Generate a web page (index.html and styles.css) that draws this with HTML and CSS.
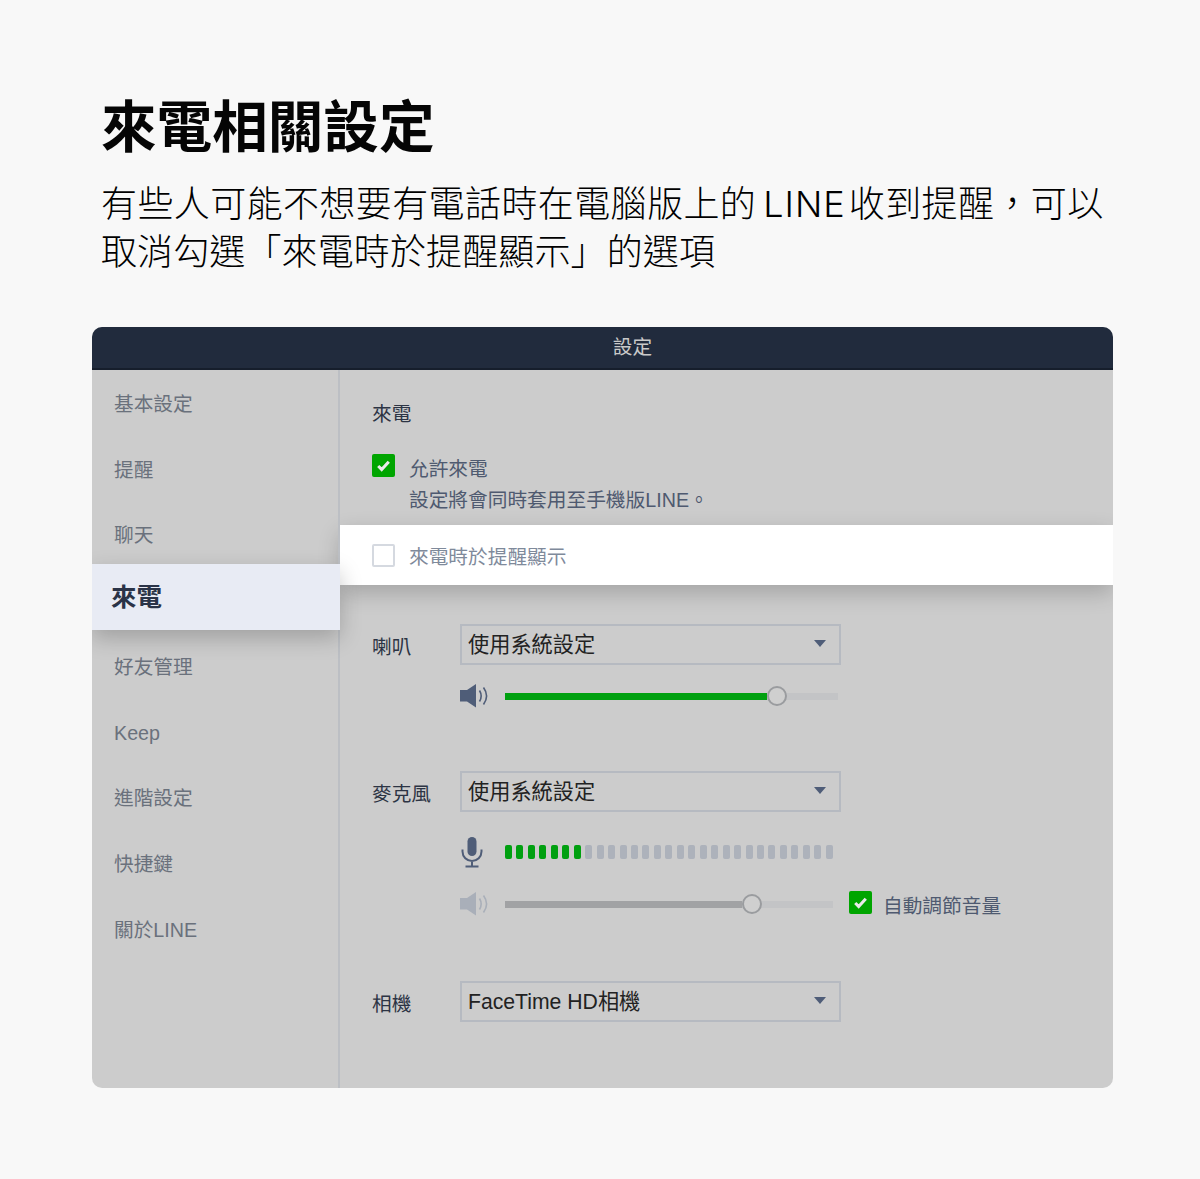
FILE: index.html
```html
<!DOCTYPE html>
<html lang="zh-Hant">
<head>
<meta charset="utf-8">
<title>來電相關設定</title>
<link rel="stylesheet" href="styles.css">
</head>
<body>
<header class="intro">
  <h1 class="title">來電相關設定</h1>
  <p class="lead"><span class="line-a">有些人可能不想要有電話時在電腦版上的<span class="latin">LINE</span>收到提醒，可以</span><span class="line-b">取消勾選「來電時於提醒顯示」的選項</span></p>
</header>
<section class="window">
  <div class="titlebar">設定</div>
  <div class="content">
    <nav class="side">
      <div class="nav-item">基本設定</div>
      <div class="nav-item">提醒</div>
      <div class="nav-item">聊天</div>
      <div class="nav-item active">來電</div>
      <div class="nav-item">好友管理</div>
      <div class="nav-item">Keep</div>
      <div class="nav-item">進階設定</div>
      <div class="nav-item">快捷鍵</div>
      <div class="nav-item">關於LINE</div>
    </nav>
    <main class="main">
      <div class="heading">來電</div>
      <div class="check-row allow">
        <span class="box on"><svg viewBox="0 0 24 24" width="24" height="24"><path d="M6.500 12.500l3.600 3.600 7.400-8" fill="none" stroke="#e9e9e9" stroke-width="3.200"/></svg></span>
        <div class="check-text">允許來電<br>設定將會同時套用至手機版LINE。</div>
      </div>
      <div class="highlight">
        <span class="box off"></span>
        <span class="highlight-text">來電時於提醒顯示</span>
      </div>
      <div class="device speaker">
        <div class="label">喇叭</div>
        <div class="controls">
          <div class="select">使用系統設定<span class="caret"></span></div>
          <div class="slider-row first">
            <svg class="spk" viewBox="0 0 28 24" width="28" height="24"><path d="M0 6h7l9-6v23.500l-9-6H0z" fill="#4f5d78"/><path d="M19.500 6.500c2 3.300 2 7.700 0 11M23.500 3.500c4 5.500 4 11.500 0 17" fill="none" stroke="#4f5d78" stroke-width="1.600"/></svg>
            <div class="track w333"><div class="fill green w262"></div><span class="thumb"></span></div>
          </div>
        </div>
      </div>
      <div class="device mic">
        <div class="label">麥克風</div>
        <div class="controls">
          <div class="select">使用系統設定<span class="caret"></span></div>
          <div class="meter-row">
            <svg class="micicon" viewBox="0 0 24 32" width="24" height="32"><rect x="7.500" y="1" width="9" height="19" rx="4.500" fill="#4f5d78"/><path d="M2.500 13.500v2a9.500 9.500 0 0 0 19 0v-2M12 25v5M5.500 30.500h13" fill="none" stroke="#4f5d78" stroke-width="2"/></svg>
            <div class="meter">
              <i class="g"></i><i class="g"></i><i class="g"></i><i class="g"></i><i class="g"></i><i class="g"></i><i class="g"></i><i></i><i></i><i></i><i></i><i></i><i></i><i></i><i></i><i></i><i></i><i></i><i></i><i></i><i></i><i></i><i></i><i></i><i></i><i></i><i></i><i></i><i></i>
            </div>
          </div>
          <div class="slider-row second">
            <svg class="spk" viewBox="0 0 28 24" width="28" height="24"><path d="M0 6h7l9-6v23.500l-9-6H0z" fill="#a9afb9"/><path d="M19.500 6.500c2 3.300 2 7.700 0 11M23.500 3.500c4 5.500 4 11.500 0 17" fill="none" stroke="#a9afb9" stroke-width="1.600"/></svg>
            <div class="track w329"><div class="fill grey w237"></div><span class="thumb"></span></div>
            <span class="box on auto"><svg viewBox="0 0 24 24" width="24" height="24"><path d="M6.500 12.500l3.600 3.600 7.400-8" fill="none" stroke="#e9e9e9" stroke-width="3.200"/></svg></span>
            <span class="auto-text">自動調節音量</span>
          </div>
        </div>
      </div>
      <div class="device cam">
        <div class="label">相機</div>
        <div class="controls">
          <div class="select">FaceTime HD相機<span class="caret"></span></div>
        </div>
      </div>
    </main>
  </div>
</section>
</body>
</html>
```
FILE: styles.css
```css
* { box-sizing: border-box; }
html, body { margin: 0; padding: 0; }
body {
  width: 1200px;
  height: 1179px;
  background: #f8f8f8;
  font-family: "Liberation Sans", "Noto Sans CJK TC", sans-serif;
  overflow: hidden;
  padding-top: 87px;
}
.intro { padding-left: 101px; height: 240px; }
.title {
  margin: 0;
  font-family: "Noto Sans CJK TC", sans-serif;
  font-size: 55.600px;
  line-height: 72px;
  font-weight: 700;
  color: #050505;
}
.lead {
  margin: 18px 0 0;
  font-family: "Noto Sans CJK TC", sans-serif;
  font-size: 36px;
  font-weight: 300;
  line-height: 48px;
  color: #000;
  white-space: nowrap;
}
.line-a { display: block; height: 48px; letter-spacing: .4px; }
.line-b { display: block; letter-spacing: .12px; }
.latin {
  font-family: "Inter", sans-serif;
  font-weight: 300;
  letter-spacing: 1px;
  margin: 0 3px 0 7px;
}
.window {
  margin-left: 92px;
  width: 1021px;
  height: 761px;
  border-radius: 10px;
  overflow: hidden;
  background: #cccccc;
  display: flex;
  flex-direction: column;
}
.titlebar {
  height: 43px;
  flex: none;
  background: #212b3d;
  border-bottom: 2px solid #161e2c;
  color: #c9c9c9;
  font-size: 19.700px;
  line-height: 40px;
  text-align: center;
  padding-left: 60px;
}
.content { flex: 1; display: flex; }
.side {
  width: 248px;
  flex: none;
  border-right: 2px solid #bcbfc4;
  position: relative;
  padding-top: 2px;
  z-index: 2;
}
.nav-item {
  height: 65.700px;
  padding-left: 22px;
  font-size: 19.700px;
  line-height: 64px;
  color: #6a717c;
}
.nav-item.active {
  margin-right: -2px;
  margin-top: -5px;
  margin-bottom: 5px;
  height: 66px;
  padding-left: 19px;
  background: #e8ebf4;
  color: #2a3347;
  font-size: 25.500px;
  font-weight: 700;
  line-height: 67px;
  box-shadow: 0 8px 22px rgba(0,0,0,.22);
  position: relative;
}
.main { flex: 1; padding-top: 28px; position: relative; }
.heading { margin-left: 32px; font-size: 19.700px; line-height: 32px; color: #2c3444; }
.check-row { margin: 24px 0 0 32px; display: flex; gap: 14px; height: 71px; }
.box {
  width: 23px;
  height: 23px;
  flex: none;
  border-radius: 2px;
  display: block;
}
.box svg { display: block; width: 23px; height: 23px; }
.box.on { background: #00a500; }
.box.off { background: #fff; border: 2px solid #d5d9e0; }
.check-text { font-size: 19.700px; line-height: 31px; color: #4f5a70; }
.highlight {
  height: 60px;
  background: #fff;
  display: flex;
  align-items: center;
  padding-left: 32px;
  gap: 14px;
  box-shadow: 0 8px 22px rgba(0,0,0,.2);
  position: relative;
}
.highlight-text { font-size: 19.700px; color: #7f8a9b; }
.device { display: flex; margin-left: 32px; }
.speaker { margin-top: 39px; height: 147px; }
.mic { height: 210px; }
.label { width: 88px; font-size: 19.700px; line-height: 32px; padding-top: 7px; color: #2c3444; flex: none; }
.controls { flex: 1; }
.select {
  width: 381px;
  height: 41px;
  border: 2px solid #b6bac1;
  padding-left: 6px;
  font-size: 21.200px;
  line-height: 37px;
  color: #222;
  position: relative;
}
.caret {
  position: absolute;
  right: 13px;
  top: 14px;
  border: 6px solid transparent;
  border-top: 7px solid #4f5d78;
  border-bottom: 0;
  width: 0;
  height: 0;
}
.slider-row { display: flex; align-items: center; height: 24px; }
.slider-row.first { margin-top: 19px; }
.slider-row.second { margin-top: 24px; }
.spk { flex: none; margin-right: 17px; }
.track { height: 7px; background: #c3c4c6; position: relative; display: flex; align-items: center; flex: none; }
.w333 { width: 333px; }
.w329 { width: 328px; }
.fill { height: 7px; }
.w262 { width: 262px; }
.w237 { width: 237px; }
.green { background: #00a010; }
.grey { background: #a1a2a4; }
.thumb {
  width: 20px;
  height: 20px;
  border-radius: 50%;
  border: 2px solid #9a9c9f;
  background: #cfcfcf;
  flex: none;
}
.meter-row { display: flex; align-items: center; height: 32px; margin-top: 24px; }
.micicon { flex: none; margin-right: 21px; }
.meter { display: flex; gap: 4.460px; }
.meter i { width: 7px; height: 14px; border-radius: 2px; background: #adb2bb; display: block; }
.meter i.g { background: #00a010; }
.auto { margin-left: 16px; margin-top: -3px; }
.auto-text { font-size: 19.700px; color: #4f5a70; margin-left: 11px; }
```
